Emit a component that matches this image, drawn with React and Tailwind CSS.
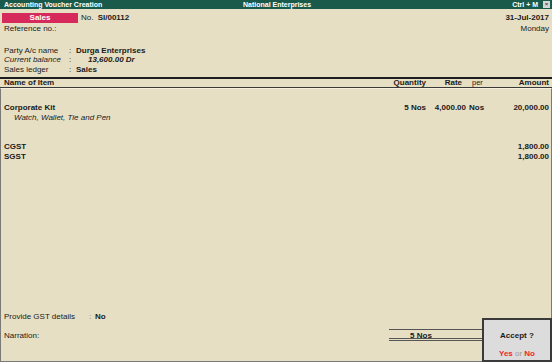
import React from 'react'

const rows = [
  { label: 'Party A/c name', value: 'Durga Enterprises' },
  { label: 'Current balance', value: '13,600.00 Dr', italic: true },
  { label: 'Sales ledger', value: 'Sales' },
]

export default function App() {
  return (
    <div className="relative w-[552px] h-[362px] bg-[#e6dfc4] text-[#1a1a1a] text-[8px] leading-[10px] font-['Liberation_Sans',Arial,sans-serif] flex flex-col overflow-hidden">
      {/* title bar */}
      <div className="h-[9px] bg-[#1a5a4b] text-white font-bold text-[7px] leading-[9px] flex items-center pl-[4px] pr-[2px]">
        <div className="flex-1">Accounting Voucher Creation</div>
        <div className="text-center">National Enterprises</div>
        <div className="flex-1 flex items-center justify-end gap-[5px]">
          <span>Ctrl + M</span>
          <span className="w-[7px] h-[7px] bg-[#d6d6d6] text-[#444] text-[6px] leading-[7px] text-center">×</span>
        </div>
      </div>

      {/* voucher header */}
      <div className="flex justify-between pt-[4px] pr-[3px]">
        <div>
          <div className="flex items-center">
            <div className="ml-[2px] w-[76px] h-[10px] bg-[#d62a5c] text-white font-bold text-center leading-[10px]">Sales</div>
            <div className="ml-[3px]">No. <span className="font-bold ml-[2px]">SI/00112</span></div>
          </div>
          <div className="pl-[4px] mt-[1px]">Reference no.:</div>
        </div>
        <div className="text-right">
          <div className="font-bold">31-Jul-2017</div>
          <div className="mt-[1px]">Monday</div>
        </div>
      </div>

      <div className="mt-[12px] pl-[4px] flex flex-col">
        {rows.map((r) => (
          <div key={r.label} className="flex h-[9.6px] items-center">
            <span className={`w-[65px] ${r.italic ? 'italic' : ''}`}>{r.label}</span>
            <span className="w-[7px]">:</span>
            <span className={`font-bold ${r.italic ? 'italic pl-[12px]' : ''}`}>{r.value}</span>
          </div>
        ))}
      </div>

      {/* column header */}
      <div className="mt-[2px] border-t-2 border-[#1e1e1e] border-b border-b-[#3a3a3a] h-[11px] flex items-center font-bold pl-[4px] pr-[3px]">
        <div className="flex-1">Name of Item</div>
        <div className="w-[60px] text-right">Quantity</div>
        <div className="w-[36px] text-right">Rate</div>
        <div className="w-[37px] pl-[10px] font-normal text-[7.5px]">per</div>
        <div className="w-[50px] text-right">Amount</div>
      </div>

      {/* body */}
      <div className="flex-1 border-l border-r border-b border-[#7a7a7a] border-t border-t-[#f4efdc] flex flex-col pl-[3px] pr-[2px]">
        <div className="mt-[14px] flex font-bold h-[10px] items-center">
          <div className="flex-1">Corporate Kit</div>
          <div className="w-[60px] text-right">5 Nos</div>
          <div className="w-[40px] text-right">4,000.00</div>
          <div className="w-[33px] pl-[3px]">Nos</div>
          <div className="w-[50px] text-right">20,000.00</div>
        </div>
        <div className="italic pl-[10px] h-[11px] flex items-center">Watch, Wallet, Tie and Pen</div>

        <div className="mt-[18px] flex font-bold h-[10px] items-center">
          <div className="flex-1">CGST</div>
          <div className="text-right">1,800.00</div>
        </div>
        <div className="flex font-bold h-[10px] items-center">
          <div className="flex-1">SGST</div>
          <div className="text-right">1,800.00</div>
        </div>

        <div className="flex-1" />

        <div className="flex h-[10px] items-center">
          <span className="w-[85px]">Provide GST details</span>
          <span className="w-[6px] text-[#777]">:</span>
          <span className="font-bold">No</span>
        </div>
        <div className="mt-[6px] flex items-center h-[13px]">
          <div className="w-[385px] pt-[2px]">Narration:</div>
          <div className="w-[94px] h-[12px] border-t border-[#555] border-b-[3px] border-b-[#555] border-double text-center font-bold leading-[9px] pr-[30px] pt-[1px]">5 Nos</div>
        </div>
        <div className="h-[20px]" />
      </div>

      {/* accept dialog */}
      <div className="absolute right-0 bottom-0 w-[70px] h-[44px] bg-[#dcdcdc] border-2 border-[#3a3a3a] flex flex-col items-center">
        <div className="mt-[11px] font-bold">Accept ?</div>
        <div className="flex-1" />
        <div className="mb-[1px] font-bold">
          <span className="text-[#f02828]">Yes</span>
          <span className="text-[#9a9a9a] font-normal"> or </span>
          <span className="text-[#f02828]">No</span>
        </div>
      </div>
    </div>
  )
}
